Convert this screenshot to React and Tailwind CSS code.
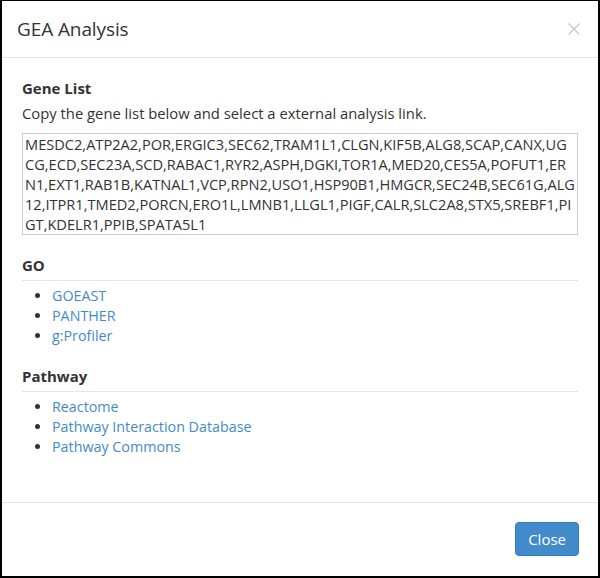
import React from 'react';

const GENE_LINES = [
  'MESDC2,ATP2A2,POR,ERGIC3,SEC62,TRAM1L1,CLGN,KIF5B,ALG8,SCAP,CANX,UG',
  'CG,ECD,SEC23A,SCD,RABAC1,RYR2,ASPH,DGKI,TOR1A,MED20,CES5A,POFUT1,ER',
  'N1,EXT1,RAB1B,KATNAL1,VCP,RPN2,USO1,HSP90B1,HMGCR,SEC24B,SEC61G,ALG',
  '12,ITPR1,TMED2,PORCN,ERO1L,LMNB1,LLGL1,PIGF,CALR,SLC2A8,STX5,SREBF1,PI',
  'GT,KDELR1,PPIB,SPATA5L1',
];

const SECTIONS = [
  { title: 'GO', links: ['GOEAST', 'PANTHER', 'g:Profiler'] },
  { title: 'Pathway', links: ['Reactome', 'Pathway Interaction Database', 'Pathway Commons'] },
];

export default function App() {
  return (
    <div
      className="w-[600px] h-[578px] bg-white text-[#333] border-t border-l-2 border-r-2 border-b-2 border-black flex flex-col"
      style={{ fontFamily: '"Open Sans", "Liberation Sans", sans-serif' }}
    >
      {/* Header */}
      <div className="h-[57px] shrink-0 flex items-center justify-between pl-[15px] pr-[15px] border-b border-[#e5e5e5]">
        <h4 className="text-[19px] leading-[20px] tracking-[-0.1px]">GEA Analysis</h4>
        <button className="w-[16px] h-[16px] flex items-center justify-center mr-[1px]">
          <svg width="14" height="12" viewBox="0 0 14 12">
            <path d="M1.5 0.5 L12.5 11.5 M12.5 0.5 L1.5 11.5" stroke="#c8c8c8" strokeWidth="1.3" fill="none" />
          </svg>
        </button>
      </div>

      {/* Body */}
      <div className="h-[444px] shrink-0 px-[20px] pt-[20px] text-[14.3px] leading-[20px]">
        <h5 className="font-bold text-[15px] leading-[20px]">Gene List</h5>
        <p className="mt-[5px] text-[14.8px]">Copy the gene list below and select a external analysis link.</p>
        <div className="mt-[10px] border border-[#ccc] pl-[2px] text-[14.6px] leading-[20px] whitespace-nowrap overflow-hidden">
          {GENE_LINES.map((l, i) => (
            <div key={i}>{l}</div>
          ))}
        </div>

        {SECTIONS.map((s) => (
          <div key={s.title} className="mt-[20px]">
            <h5 className="font-bold text-[15px] leading-[20px] pb-[5px] border-b border-[#e5e5e5]">{s.title}</h5>
            <ul className="list-disc pl-[30px] mt-[5px] marker:text-[#333]">
              {s.links.map((l) => (
                <li key={l}>
                  <a href="#" className="text-[#428bca]">{l}</a>
                </li>
              ))}
            </ul>
          </div>
        ))}
      </div>

      {/* Footer */}
      <div className="flex-1 border-t border-[#e5e5e5] flex justify-end items-start pt-[19px] pr-[19px]">
        <button className="bg-[#428bca] border border-[#357ebd] text-white text-[15px] leading-[20px] px-[12px] py-[6px] rounded-[4px]">
          Close
        </button>
      </div>
    </div>
  );
}
